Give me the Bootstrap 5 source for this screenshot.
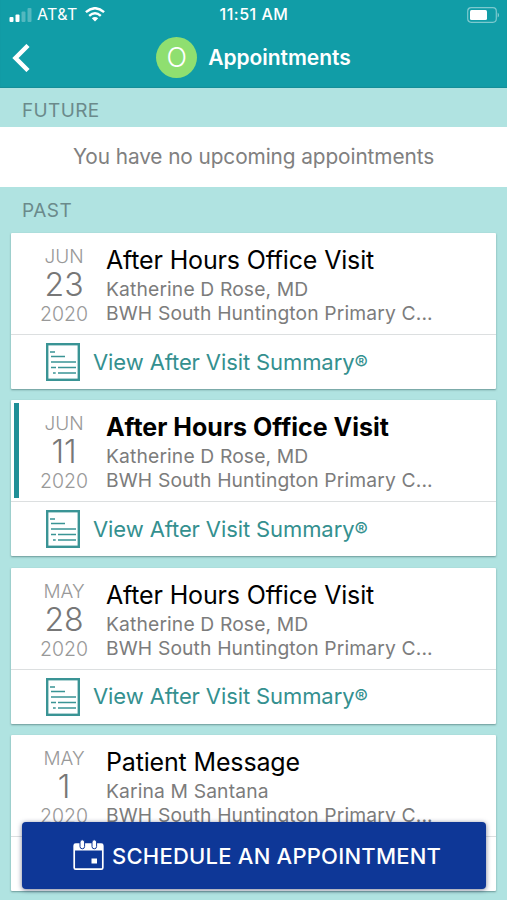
<!DOCTYPE html>
<html lang="en">
<head>
<meta charset="utf-8">
<meta name="viewport" content="width=device-width, initial-scale=1">
<title>Appointments</title>
<link href="https://cdn.jsdelivr.net/npm/bootstrap@5.3.0/dist/css/bootstrap.min.css" rel="stylesheet">
<style>
body{font-family:Inter,"Liberation Sans",sans-serif;background:#b0e3e1;height:900px;overflow:hidden;color:#000}
.topbar{background:#119da7;height:88px;box-shadow:inset 0 -1px 1px #168e98}
.status{height:29px;font-size:15.5px;line-height:29px;padding:0 8px 0 9px}
.status>*{flex:1 1 0}
.carrier{font-size:16px;letter-spacing:.35px;margin:0 7px 0 5px}
.clock{font-size:16px;letter-spacing:.5px}
.titlebar{height:57px;padding:0 30px 0 12px}
.avatar{width:41px;height:41px;background:#8fdf70;font-size:27px;line-height:1;font-weight:300;margin-right:11px}
.page-title{font-size:21px;font-weight:600;letter-spacing:-.04px}
.section-label{font-size:19px;color:#6b8a8b;padding-left:22px;height:39px;line-height:45px;letter-spacing:.35px}
.section-label.past{height:46px;line-height:47px;letter-spacing:.5px}
.notice{height:60px;font-size:20.8px;line-height:60px;color:#808080;letter-spacing:-.09px}
.visits{padding:0 11px}
.visit{height:156px;margin-bottom:11.3px;border-radius:1px;box-shadow:0 1px 2px rgba(50,90,90,.55)}
.visit-main{height:102px;border-bottom:1px solid #dcdfe0;padding-left:3px}
.unread{width:5px;margin:3px 0;height:95px}
.unread.on{background:#1f8f97}
.day{width:90px;padding-top:11px;color:#999}
.mon{font-size:19px;line-height:25px;font-weight:300}
.num{font-size:32px;line-height:32px;font-weight:300;color:#777}
.yr{font-size:19.5px;line-height:26px;font-weight:300}
.info{padding-top:10px;margin-left:-3px;color:#7c7c7c;font-size:19.3px;line-height:24px;letter-spacing:.13px}
.kind{font-size:25px;line-height:34px;color:#000;letter-spacing:-.16px}
.unseen .kind{font-weight:700;letter-spacing:0}
.summary{height:54px;color:#34908f;font-size:22px;padding-left:35px;line-height:54px;letter-spacing:-.1px}
.summary svg{margin-right:13px}
.reg{font-size:20px}
.schedule{position:absolute;left:22px;top:822px;width:464px;height:67px;background:#0e3797;border-radius:4px;font-size:22px;font-weight:500;letter-spacing:.23px;box-shadow:0 1px 5px rgba(30,40,80,.6);padding:2px 0 0 51px}
.schedule svg{margin:-4px 8px 0 0}
</style>
</head>
<body class="position-relative">
<svg width="0" height="0" class="position-absolute"><defs>
<symbol id="doc" viewBox="0 0 34 38"><rect x="1.2" y="1.2" width="31.600" height="35.600" fill="#fff" stroke="#3a9495" stroke-width="2.400"/><path d="M4 9h5M5 13.500h14M5 19h25M5 24.500h5M12 24.500h18M7 30h2.700M12 30h18" stroke="#3a9495" stroke-width="1.700" fill="none"/></symbol>
</defs></svg>
<header class="topbar text-white">
<div class="status d-flex align-items-center">
<div class="d-flex align-items-center">
<svg width="23" height="14" viewBox="0 0 23 14" fill="#fff"><rect x=".5" y="9" width="4" height="5" rx="1"/><rect x="6.500" y="6.500" width="4" height="7.500" rx="1"/><rect x="12.500" y="3.500" width="4" height="10.500" rx="1" opacity=".28"/><rect x="18.500" y="0" width="4" height="14" rx="1" opacity=".28"/></svg>
<span class="carrier">AT&amp;T</span>
<svg width="20" height="15" viewBox="0 0 20 15" fill="none" stroke="#fff" stroke-width="2.400"><path d="M.9 5.200Q10-2.800 19.100 5.200M4.200 8.800Q10 3.700 15.800 8.800"/><path d="M10 14.500 6.800 11.300Q10 8.700 13.200 11.300Z" fill="#fff" stroke="none"/></svg>
</div>
<div class="text-center fw-medium clock">11:51 AM</div>
<div class="d-flex justify-content-end"><svg width="32" height="16" viewBox="0 0 32 16"><rect x=".7" y=".7" width="28.600" height="14.600" rx="3.500" fill="none" stroke="#fff" stroke-opacity=".45" stroke-width="1.200"/><rect x="3" y="3" width="17" height="10" rx="1.500" fill="#fff"/><path d="M30.700 5.500q1.300 1 1.300 2.500t-1.300 2.500z" fill="#fff" opacity=".5"/></svg></div>
</div>
<div class="titlebar d-flex align-items-center">
<svg width="18" height="28" viewBox="0 0 18 28" fill="none" stroke="#fff" stroke-width="4.500"><path d="M16 1.500 3.500 14 16 26.500"/></svg>
<div class="d-flex align-items-center flex-grow-1 justify-content-center"><span class="avatar rounded-circle d-flex align-items-center justify-content-center">O</span><span class="page-title">Appointments</span></div>
</div>
</header>
<main>
<div class="section-label"><span>FUTURE</span></div>
<div class="notice bg-white text-center"><span>You have no upcoming appointments</span></div>
<div class="section-label past"><span>PAST</span></div>
<div class="visits">
<article class="visit bg-white"><div class="visit-main d-flex"><div class="unread"></div><div class="day text-center"><div class="mon">JUN</div><div class="num">23</div><div class="yr">2020</div></div><div class="info text-nowrap"><div class="kind">After Hours Office Visit</div><div class="who">Katherine D Rose, MD</div><div class="where">BWH South Huntington Primary C...</div></div></div><div class="summary d-flex align-items-center"><svg width="34" height="38"><use href="#doc"/></svg><span>View After Visit Summary<span class="reg">®</span></span></div></article>
<article class="visit bg-white unseen"><div class="visit-main d-flex"><div class="unread on"></div><div class="day text-center"><div class="mon">JUN</div><div class="num">11</div><div class="yr">2020</div></div><div class="info text-nowrap"><div class="kind">After Hours Office Visit</div><div class="who">Katherine D Rose, MD</div><div class="where">BWH South Huntington Primary C...</div></div></div><div class="summary d-flex align-items-center"><svg width="34" height="38"><use href="#doc"/></svg><span>View After Visit Summary<span class="reg">®</span></span></div></article>
<article class="visit bg-white"><div class="visit-main d-flex"><div class="unread"></div><div class="day text-center"><div class="mon">MAY</div><div class="num">28</div><div class="yr">2020</div></div><div class="info text-nowrap"><div class="kind">After Hours Office Visit</div><div class="who">Katherine D Rose, MD</div><div class="where">BWH South Huntington Primary C...</div></div></div><div class="summary d-flex align-items-center"><svg width="34" height="38"><use href="#doc"/></svg><span>View After Visit Summary<span class="reg">®</span></span></div></article>
<article class="visit bg-white"><div class="visit-main d-flex"><div class="unread"></div><div class="day text-center"><div class="mon">MAY</div><div class="num">1</div><div class="yr">2020</div></div><div class="info text-nowrap"><div class="kind">Patient Message</div><div class="who">Karina M Santana</div><div class="where">BWH South Huntington Primary C...</div></div></div></article>
</div>
</main>
<button class="schedule btn text-white d-flex align-items-center text-nowrap border-0" type="button"><svg width="31" height="32" viewBox="0 0 31 32"><rect x="1.200" y="5.200" width="28.600" height="25" rx="1.500" fill="none" stroke="#fff" stroke-width="1.700"/><path d="M1 5h29v6.500H1z" fill="#fff"/><rect x="7" y=".8" width="4.600" height="9" rx="2.300" fill="#fff" stroke="#0e3797"/><rect x="19" y=".8" width="4.600" height="9" rx="2.300" fill="#fff" stroke="#0e3797"/><rect x="18.500" y="19.500" width="5.500" height="5" fill="#fff"/></svg><span>SCHEDULE AN APPOINTMENT</span></button>
<script src="https://cdn.jsdelivr.net/npm/bootstrap@5.3.0/dist/js/bootstrap.bundle.min.js"></script>
</body>
</html>
